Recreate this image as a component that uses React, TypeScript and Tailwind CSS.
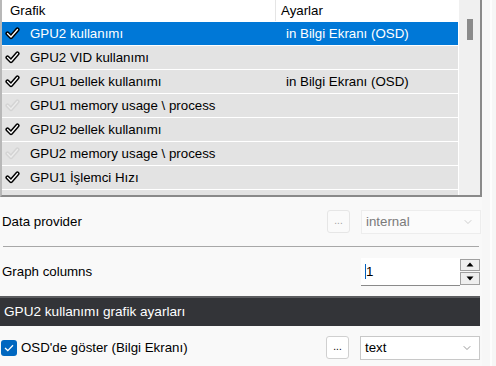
import { ChevronDown } from 'lucide-react';

const rows = [
  { name: 'GPU2 kullanımı', setting: 'in Bilgi Ekranı (OSD)', on: true, selected: true },
  { name: 'GPU2 VID kullanımı', setting: '', on: true },
  { name: 'GPU1 bellek kullanımı', setting: 'in Bilgi Ekranı (OSD)', on: true },
  { name: 'GPU1 memory usage \\ process', setting: '', on: false },
  { name: 'GPU2 bellek kullanımı', setting: '', on: true },
  { name: 'GPU2 memory usage \\ process', setting: '', on: false },
  { name: 'GPU1 İşlemci Hızı', setting: '', on: true },
  { name: '', setting: '', on: false },
];

function Check({ on }: { on: boolean }) {
  return (
    <svg width="15" height="13" viewBox="0 0 15 13" className="shrink-0">
      <path d="M2.5 6.5 L6 10 L12.5 2.5" fill="none" stroke={on ? '#000' : '#d4d4d4'} strokeWidth="4.2" strokeLinecap="round" strokeLinejoin="round" />
      <path d="M2.5 6.5 L6 10 L12.5 2.5" fill="none" stroke={on ? '#fff' : '#ececec'} strokeWidth="1.3" strokeLinecap="round" strokeLinejoin="round" />
    </svg>
  );
}

export default function App() {
  return (
    <div className="w-[496px] h-[366px] overflow-hidden bg-[#f9f9f9] flex text-[13.3px] text-black" style={{ fontFamily: '"Liberation Sans", Arial, sans-serif' }}>
      <div className="w-[482px] flex flex-col">
        {/* list */}
        <div className="h-[197px] shrink-0 flex border-l-2 border-l-[#b8b8b8] border-r-2 border-b-2 border-[#8a8a8a] bg-white">
          <div className="w-[456px] flex flex-col overflow-hidden">
            <div className="h-[21px] shrink-0 flex items-center bg-white">
              <div className="w-[274px] pl-2 border-r border-[#e5e5e5] h-full flex items-center">Grafik</div>
              <div className="pl-[5px]">Ayarlar</div>
            </div>
            {rows.map((r, i) => (
              <div key={i} className={`h-[24px] shrink-0 border-t border-white flex items-center ${r.selected ? 'bg-[#0078d7] text-white' : 'bg-[#e3e3e3]'}`}>
                <div className="w-[284px] flex items-center">
                  <div className="w-[28px] pl-[3px]">{r.name && <Check on={r.on} />}</div>
                  <span>{r.name}</span>
                </div>
                <span>{r.setting}</span>
              </div>
            ))}
          </div>
          <div className="w-[1px] bg-white" />
          <div className="flex-1 bg-[#f0f0f0] flex justify-center pt-[19px]">
            <div className="w-[6px] h-[21px] bg-[#8b8b8b]" />
          </div>
        </div>

        {/* data provider */}
        <div className="h-[49px] shrink-0 flex items-center pl-[2px] pr-[1px]">
          <span className="flex-1">Data provider</span>
          <div className="w-[23px] h-[23px] rounded-[3px] border border-[#e6e6e6] bg-[#fafafa] flex items-center justify-center text-[10px] text-[#a0a0a0] pb-[2px]">...</div>
          <div className="ml-[11px] w-[120px] h-[24px] border border-[#ededed] bg-[#fbfbfb] flex items-center pl-[4px] pr-[6px] text-[#7a7a7a]">
            <span className="flex-1">internal</span>
            <ChevronDown className="w-[12px] h-[12px] text-[#b0b0b0]" strokeWidth={1.2} />
          </div>
        </div>
        <div className="h-[1px] shrink-0 ml-[3px] mr-[3px] bg-[#a8a8a8]" />

        {/* graph columns */}
        <div className="h-[49px] shrink-0 flex items-center pl-[2px] pr-[2px]">
          <span className="flex-1">Graph columns</span>
          <div className="w-[99px] h-[28px] bg-white border-b border-[#8a8a8a] flex items-center pl-[4px]">
            <span className="border-l border-[#0060c0] leading-[15px]">1</span>
          </div>
          <div className="w-[20px] h-[28px] flex flex-col gap-[1px] py-[1px]">
            <div className="flex-1 border border-[#a0a0a0] bg-[#efefef] flex items-center justify-center">
              <svg width="8" height="5" viewBox="0 0 8 5"><path d="M4 0.5 L7.5 4.5 L0.5 4.5 Z" fill="#000" /></svg>
            </div>
            <div className="flex-1 border border-[#a0a0a0] bg-[#efefef] flex items-center justify-center">
              <svg width="8" height="5" viewBox="0 0 8 5"><path d="M0.5 0.5 L7.5 0.5 L4 4.5 Z" fill="#000" /></svg>
            </div>
          </div>
        </div>

        {/* section header */}
        <div className="h-[30px] shrink-0 mr-[2px] border-t-2 border-[#5c5d60] bg-[#333438] text-white flex items-center pl-[4px] text-[13.6px]">
          GPU2 kullanımı grafik ayarları
        </div>

        {/* osd row */}
        <div className="h-[40px] shrink-0 flex items-center pl-[1px] pr-[2px] pt-[3px]">
          <div className="w-[16px] h-[16px] rounded-[3px] bg-[#0067c0] flex items-center justify-center">
            <svg width="10" height="8" viewBox="0 0 10 8"><path d="M1 4 L3.8 6.6 L9 1.2" fill="none" stroke="#fff" strokeWidth="1.3" /></svg>
          </div>
          <span className="flex-1 ml-[4px]">OSD'de göster (Bilgi Ekranı)</span>
          <div className="w-[23px] h-[23px] rounded-[3px] border border-[#d0d0d0] bg-white flex items-center justify-center text-[10px] pb-[2px]">...</div>
          <div className="ml-[11px] w-[120px] h-[24px] border border-[#c8c8c8] bg-white flex items-center pl-[4px] pr-[6px]">
            <span className="flex-1">text</span>
            <ChevronDown className="w-[12px] h-[12px] text-[#555]" strokeWidth={1.2} />
          </div>
        </div>
      </div>
      <div className="w-[8px] bg-[#f7f7f7]" />
      <div className="w-[2px] bg-[#fdfdfd]" />
      <div className="flex-1 bg-[#f6f6f6]" />
    </div>
  );
}
